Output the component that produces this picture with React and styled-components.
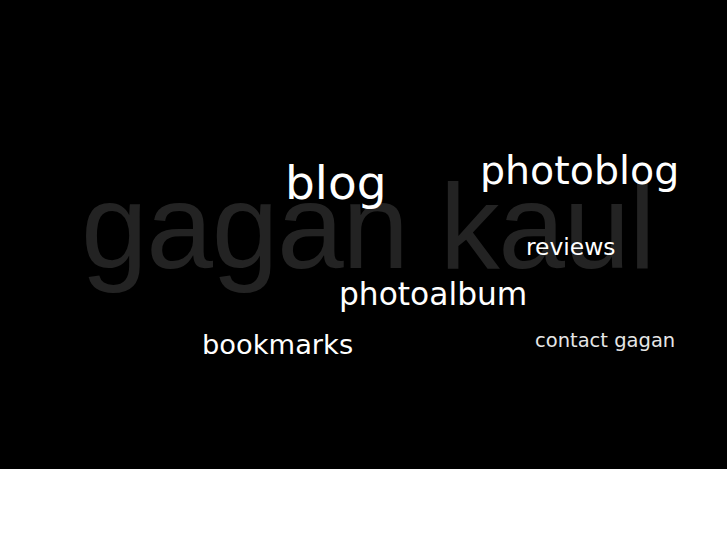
import React from 'react';
import styled, { createGlobalStyle } from 'styled-components';

const GlobalStyle = createGlobalStyle`
  html, body {
    margin: 0;
    padding: 0;
    background: #fff;
  }
`;

const Page = styled.div`
  width: 100%;
  min-height: 545px;
  background: #fff;
`;

// the cloud is a free canvas: each word's spot is part of the design
const Stage = styled.div`
  position: relative;
  height: 469px;
  background: #000;
  overflow: hidden;
`;

const Name = styled.div`
  position: absolute;
  left: 81px;
  top: 166px;
  font-family: 'Liberation Sans', Arial, sans-serif;
  font-size: 120px;
  line-height: 1;
  letter-spacing: -1.4px;
  color: #232323;
  white-space: nowrap;
  user-select: none;
`;

const Word = styled.a`
  position: absolute;
  left: ${(p) => p.$x}px;
  top: ${(p) => p.$y}px;
  font-family: 'DejaVu Sans', Verdana, sans-serif;
  font-size: ${(p) => p.$size}px;
  line-height: 1;
  color: ${(p) => p.$color || '#fff'};
  text-decoration: none;
  white-space: nowrap;
  cursor: pointer;
`;

const words = [
  { label: 'blog', x: 285, y: 159, size: 47 },
  { label: 'photoblog', x: 480, y: 151, size: 39.5 },
  { label: 'reviews', x: 526, y: 236, size: 23.4 },
  { label: 'photoalbum', x: 339, y: 279, size: 31.3 },
  { label: 'bookmarks', x: 202, y: 331, size: 27.3 },
  { label: 'contact gagan', x: 535, y: 331, size: 19.5, color: '#e6e6e6' },
];

export default function App() {
  return (
    <Page>
      <GlobalStyle />
      <Stage>
        <Name>gagan kaul</Name>
        {words.map((w) => (
          <Word key={w.label} href="#" $x={w.x} $y={w.y} $size={w.size} $color={w.color}>
            {w.label}
          </Word>
        ))}
      </Stage>
    </Page>
  );
}
